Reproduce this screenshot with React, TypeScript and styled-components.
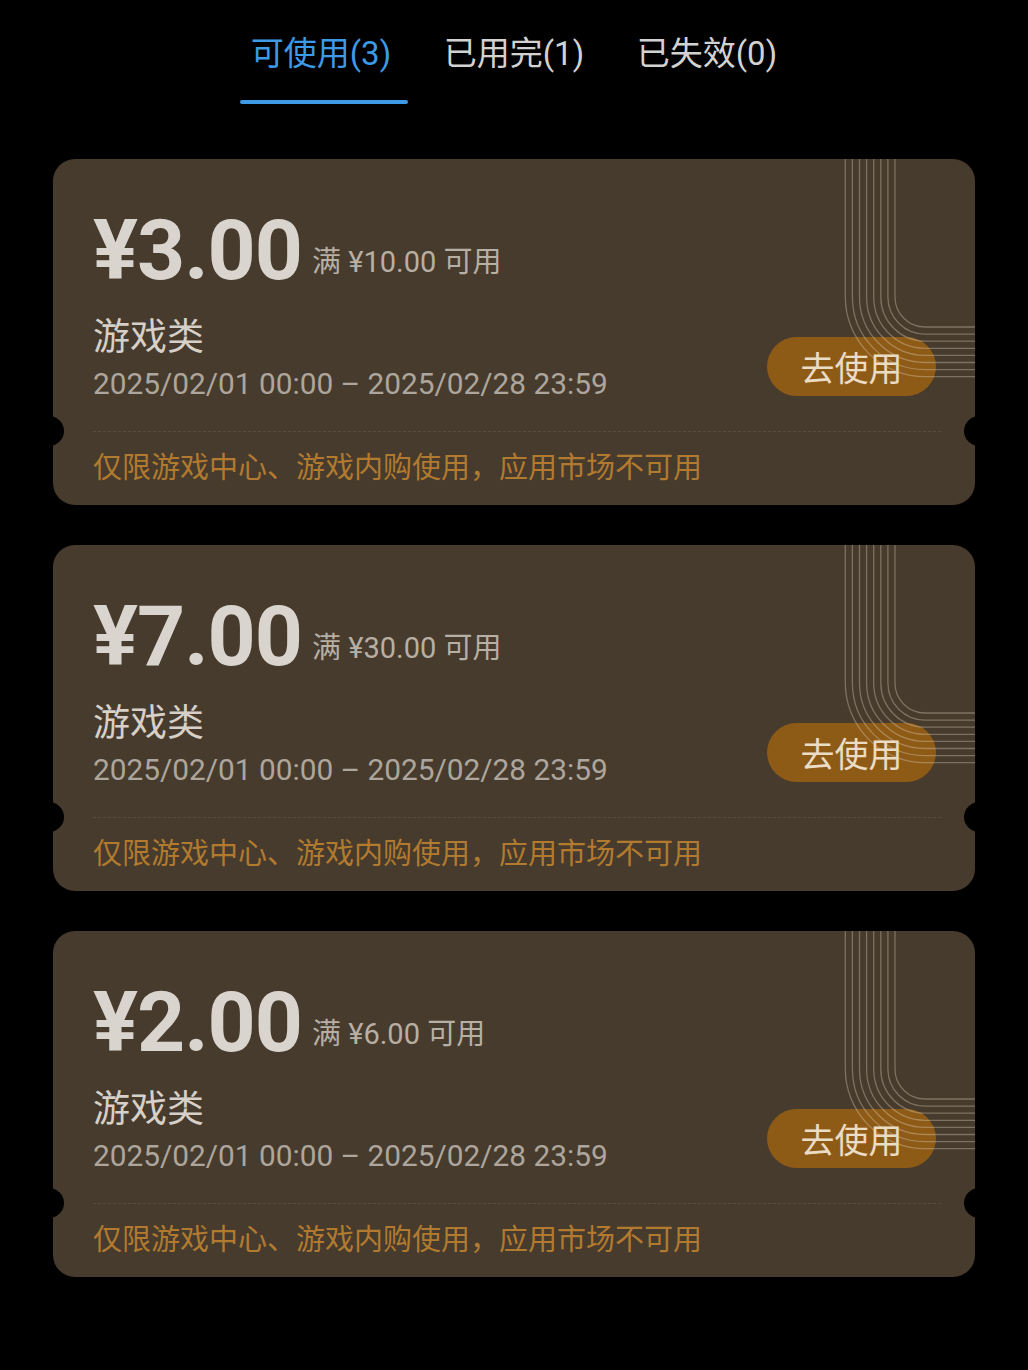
import React from "react";
import styled, { createGlobalStyle } from "styled-components";

const Global = createGlobalStyle`
  html, body { margin: 0; padding: 0; background: #000; }
  body { font-family: Roboto, "Noto Sans CJK SC", sans-serif; }
  * { box-sizing: border-box; }
`;

const Page = styled.div`
  width: 1028px;
  min-height: 1370px;
  background: #000;
  display: flex;
  flex-direction: column;
`;

const Tabs = styled.div`
  display: flex;
  justify-content: center;
  padding-top: 32px;
`;

const Tab = styled.div<{ $active?: boolean }>`
  width: 193px;
  display: flex;
  flex-direction: column;
  align-items: center;
  gap: 24px;
  font-size: 33px;
  line-height: 44px;
  color: ${(p) => (p.$active ? "#3d9ae6" : "#d2d2d2")};
`;

const Underline = styled.div<{ $active?: boolean }>`
  width: 168px;
  height: 4px;
  margin-left: 6px;
  border-radius: 2px;
  background: ${(p) => (p.$active ? "#3d9ae6" : "transparent")};
`;

const List = styled.div`
  display: flex;
  flex-direction: column;
  gap: 40px;
  padding: 55px 53px 0;
`;

const Card = styled.div`
  position: relative;
  height: 346px;
  border-radius: 22px;
  background: #463b2d;
  overflow: hidden;
  display: flex;
  flex-direction: column;
`;

const Deco = styled.svg`
  position: absolute;
  inset: 0;
  pointer-events: none;
`;

const Upper = styled.div`
  display: flex;
  justify-content: space-between;
  align-items: flex-end;
  padding: 50px 39px 30px 40px;
`;

const Info = styled.div`
  display: flex;
  flex-direction: column;
`;

const PriceRow = styled.div`
  display: flex;
  align-items: flex-end;
  gap: 10px;
`;

const Price = styled.div`
  font-family: Roboto, sans-serif;
  font-weight: 700;
  font-size: 84px;
  line-height: 84px;
  color: #d9d4cd;
  letter-spacing: -1px;
`;

const Threshold = styled.div`
  font-size: 29px;
  line-height: 28px;
  color: #b7afa4;
  margin-bottom: 17px;
`;

const Category = styled.div`
  margin-top: 23px;
  font-size: 37px;
  line-height: 44px;
  color: #d6d0c8;
`;

const DateText = styled.div`
  margin-top: 7px;
  font-size: 29.8px;
  line-height: 34px;
  color: #aea69c;
`;

const UseButton = styled.button`
  width: 169px;
  height: 59px;
  margin-bottom: 5px;
  border: none;
  border-radius: 30px;
  background: #8e5b17;
  color: #ebdcc5;
  font-family: "Noto Sans CJK SC", sans-serif;
  font-size: 34px;
  display: flex;
  align-items: center;
  justify-content: center;
  padding: 0;
`;

const Divider = styled.div`
  margin: 0 34px 0 40px;
  border-top: 1px dashed rgba(255, 255, 255, 0.09);
  height: 0;
  &::before,
  &::after {
    content: "";
    position: absolute;
    top: 257px;
    width: 30px;
    height: 30px;
    border-radius: 50%;
    background: #000;
  }
  &::before { left: -19px; }
  &::after { right: -19px; }
`;

const Note = styled.div`
  padding: 16px 40px 0;
  font-size: 29px;
  line-height: 40px;
  color: #b27a2f;
`;

const lines = Array.from({ length: 8 }, (_, i) => {
  const r = 30 + i * 7.1;
  const cx = 872;
  const cy = 138;
  const x = cx - r;
  const y = cy + r;
  return `M${x} 0 L${x} ${cy} A${r} ${r} 0 0 0 ${cx} ${y} L922 ${y}`;
});

type Coupon = { price: string; threshold: string };

const coupons: Coupon[] = [
  { price: "¥3.00", threshold: "满 ¥10.00 可用" },
  { price: "¥7.00", threshold: "满 ¥30.00 可用" },
  { price: "¥2.00", threshold: "满 ¥6.00 可用" },
];

const CouponCard = ({ c }: { c: Coupon }) => (
  <Card>
    <Upper>
      <Info>
        <PriceRow>
          <Price>{c.price}</Price>
          <Threshold>{c.threshold}</Threshold>
        </PriceRow>
        <Category>游戏类</Category>
        <DateText>2025/02/01 00:00 – 2025/02/28 23:59</DateText>
      </Info>
      <UseButton>去使用</UseButton>
    </Upper>
    <Divider />
    <Note>仅限游戏中心、游戏内购使用，应用市场不可用</Note>
    <Deco width="922" height="346" viewBox="0 0 922 346">
      {lines.map((d, i) => (
        <path key={i} d={d} fill="none" stroke="rgba(225,210,190,0.36)" strokeWidth="1.3" />
      ))}
    </Deco>
  </Card>
);

export default function App() {
  return (
    <Page>
      <Global />
      <Tabs>
        <Tab $active>
          可使用(3)
          <Underline $active />
        </Tab>
        <Tab>
          已用完(1)
          <Underline />
        </Tab>
        <Tab>
          已失效(0)
          <Underline />
        </Tab>
      </Tabs>
      <List>
        {coupons.map((c, i) => (
          <CouponCard key={i} c={c} />
        ))}
      </List>
    </Page>
  );
}
